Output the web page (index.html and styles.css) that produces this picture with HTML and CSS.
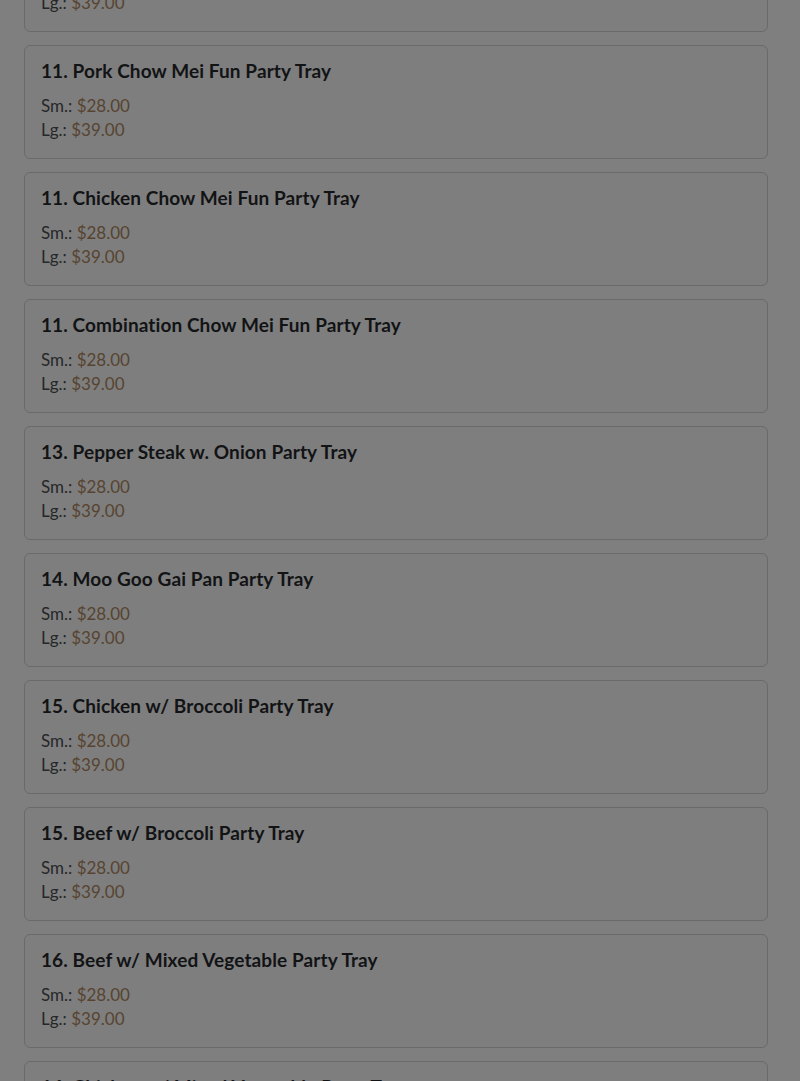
FILE: index.html
```html
<!DOCTYPE html>
<html>
<head>
<meta charset="utf-8">
<link rel="stylesheet" href="styles.css">
</head>
<body>
<div class="page">
  <div class="menu">
    <div class="item"><h3 class="name">11. Beef Chow Mei Fun Party Tray</h3><div class="price">Sm.: <span>$28.00</span></div><div class="price">Lg.: <span>$39.00</span></div></div>
    <div class="item"><h3 class="name">11. Pork Chow Mei Fun Party Tray</h3><div class="price">Sm.: <span>$28.00</span></div><div class="price">Lg.: <span>$39.00</span></div></div>
    <div class="item"><h3 class="name">11. Chicken Chow Mei Fun Party Tray</h3><div class="price">Sm.: <span>$28.00</span></div><div class="price">Lg.: <span>$39.00</span></div></div>
    <div class="item"><h3 class="name">11. Combination Chow Mei Fun Party Tray</h3><div class="price">Sm.: <span>$28.00</span></div><div class="price">Lg.: <span>$39.00</span></div></div>
    <div class="item"><h3 class="name">13. Pepper Steak w. Onion Party Tray</h3><div class="price">Sm.: <span>$28.00</span></div><div class="price">Lg.: <span>$39.00</span></div></div>
    <div class="item"><h3 class="name">14. Moo Goo Gai Pan Party Tray</h3><div class="price">Sm.: <span>$28.00</span></div><div class="price">Lg.: <span>$39.00</span></div></div>
    <div class="item"><h3 class="name">15. Chicken w/ Broccoli Party Tray</h3><div class="price">Sm.: <span>$28.00</span></div><div class="price">Lg.: <span>$39.00</span></div></div>
    <div class="item"><h3 class="name">15. Beef w/ Broccoli Party Tray</h3><div class="price">Sm.: <span>$28.00</span></div><div class="price">Lg.: <span>$39.00</span></div></div>
    <div class="item"><h3 class="name">16. Beef w/ Mixed Vegetable Party Tray</h3><div class="price">Sm.: <span>$28.00</span></div><div class="price">Lg.: <span>$39.00</span></div></div>
    <div class="item"><h3 class="name">16. Chicken w/ Mixed Vegetable Party Tray</h3><div class="price">Sm.: <span>$28.00</span></div><div class="price">Lg.: <span>$39.00</span></div></div>
  </div>
</div>
</body>
</html>
```
FILE: styles.css
```css
html, body {
  margin: 0;
  padding: 0;
  background: #7f7f7f;
  height: 1081px;
  overflow: hidden;
}
body {
  font-family: Lato, "Noto Sans", sans-serif;
  color: #111214;
}
.page {
  padding: 0 32px 0 24px;
}
.menu {
  display: flex;
  flex-direction: column;
  gap: 13px;
  margin-top: -82px;
}
.item {
  border: 1px solid #6a6a6a;
  border-radius: 6px;
  background: #7e7e7e;
  padding: 13px 16px 15px 16px;
  box-sizing: border-box;
  height: 114px;
}
.name {
  margin: 0 0 11px 0;
  font-size: 19px;
  line-height: 24px;
  font-weight: 700;
  color: #121315;
  letter-spacing: 0.1px;
}
.price {
  font-size: 17px;
  line-height: 24px;
  color: #262729;
}
.price span {
  color: #574430;
}
```
